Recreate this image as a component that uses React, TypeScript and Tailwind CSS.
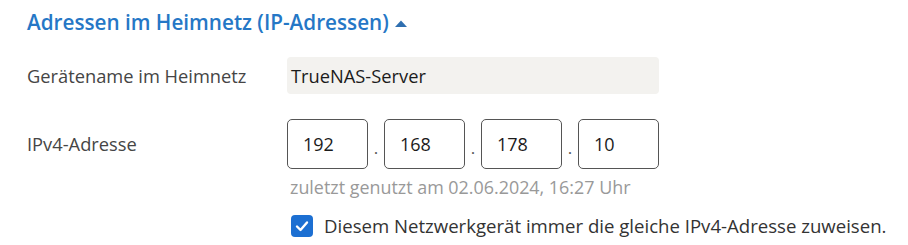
export default function App() {
  const font = "font-['Open_Sans','Noto_Sans',sans-serif]";
  const parts = ["192", "168", "178", "10"];
  return (
    <div className={`${font} w-[908px] h-[245px] bg-white pl-[27px] pt-[8px] overflow-hidden`}>
      <div className="flex items-center h-[30px]">
        <span className="text-[20.7px] font-semibold text-[#2577c6]">
          Adressen im Heimnetz (IP-Adressen)
        </span>
        <svg width="12" height="8" viewBox="0 0 12 8" className="ml-[6px] mt-[1px]">
          <path d="M0 7 L6 0.5 L12 7 Z" fill="#2f6fb0" />
        </svg>
      </div>
      <div className="flex items-center mt-[19px]">
        <div className="w-[260px] text-[18.3px] text-[#454545]">Gerätename im Heimnetz</div>
        <div className="w-[372px] h-[37px] bg-[#f3f2ef] rounded-[4px] pl-[4px] flex items-center text-[18.3px] text-[#1b1b1b]">
          TrueNAS-Server
        </div>
      </div>
      <div className="flex mt-[25px]">
        <div className="w-[260px] h-[50px] flex items-center text-[18.3px] text-[#454545]">IPv4-Adresse</div>
        <div className="flex flex-col">
          <div className="flex items-center">
            {parts.map((p, i) => (
              <div key={i} className="flex items-center">
                {i > 0 && (
                  <span className="w-[16px] text-center text-[17px] text-[#555] mt-[8px]">.</span>
                )}
                <div className="w-[81px] h-[50px] border border-[#555] rounded-[5px] pl-[15px] flex items-center text-[18px] text-[#1b1b1b]">
                  {p}
                </div>
              </div>
            ))}
          </div>
          <div className="mt-[7px] pl-[3px] text-[17.9px] text-[#999] leading-[22px]">
            zuletzt genutzt am 02.06.2024, 16:27 Uhr
          </div>
          <div className="flex items-center mt-[14px] pl-[4px]">
            <div className="w-[22px] h-[22px] rounded-[4px] bg-[#1c6fd2] flex items-center justify-center">
              <svg width="16" height="16" viewBox="0 0 16 16">
                <path d="M3 8.5 L6.5 12 L13 4.5" stroke="white" strokeWidth="2.4" fill="none" strokeLinecap="round" strokeLinejoin="round" />
              </svg>
            </div>
            <span className="ml-[11px] text-[18.6px] text-[#333]">
              Diesem Netzwerkgerät immer die gleiche IPv4-Adresse zuweisen.
            </span>
          </div>
        </div>
      </div>
    </div>
  );
}
